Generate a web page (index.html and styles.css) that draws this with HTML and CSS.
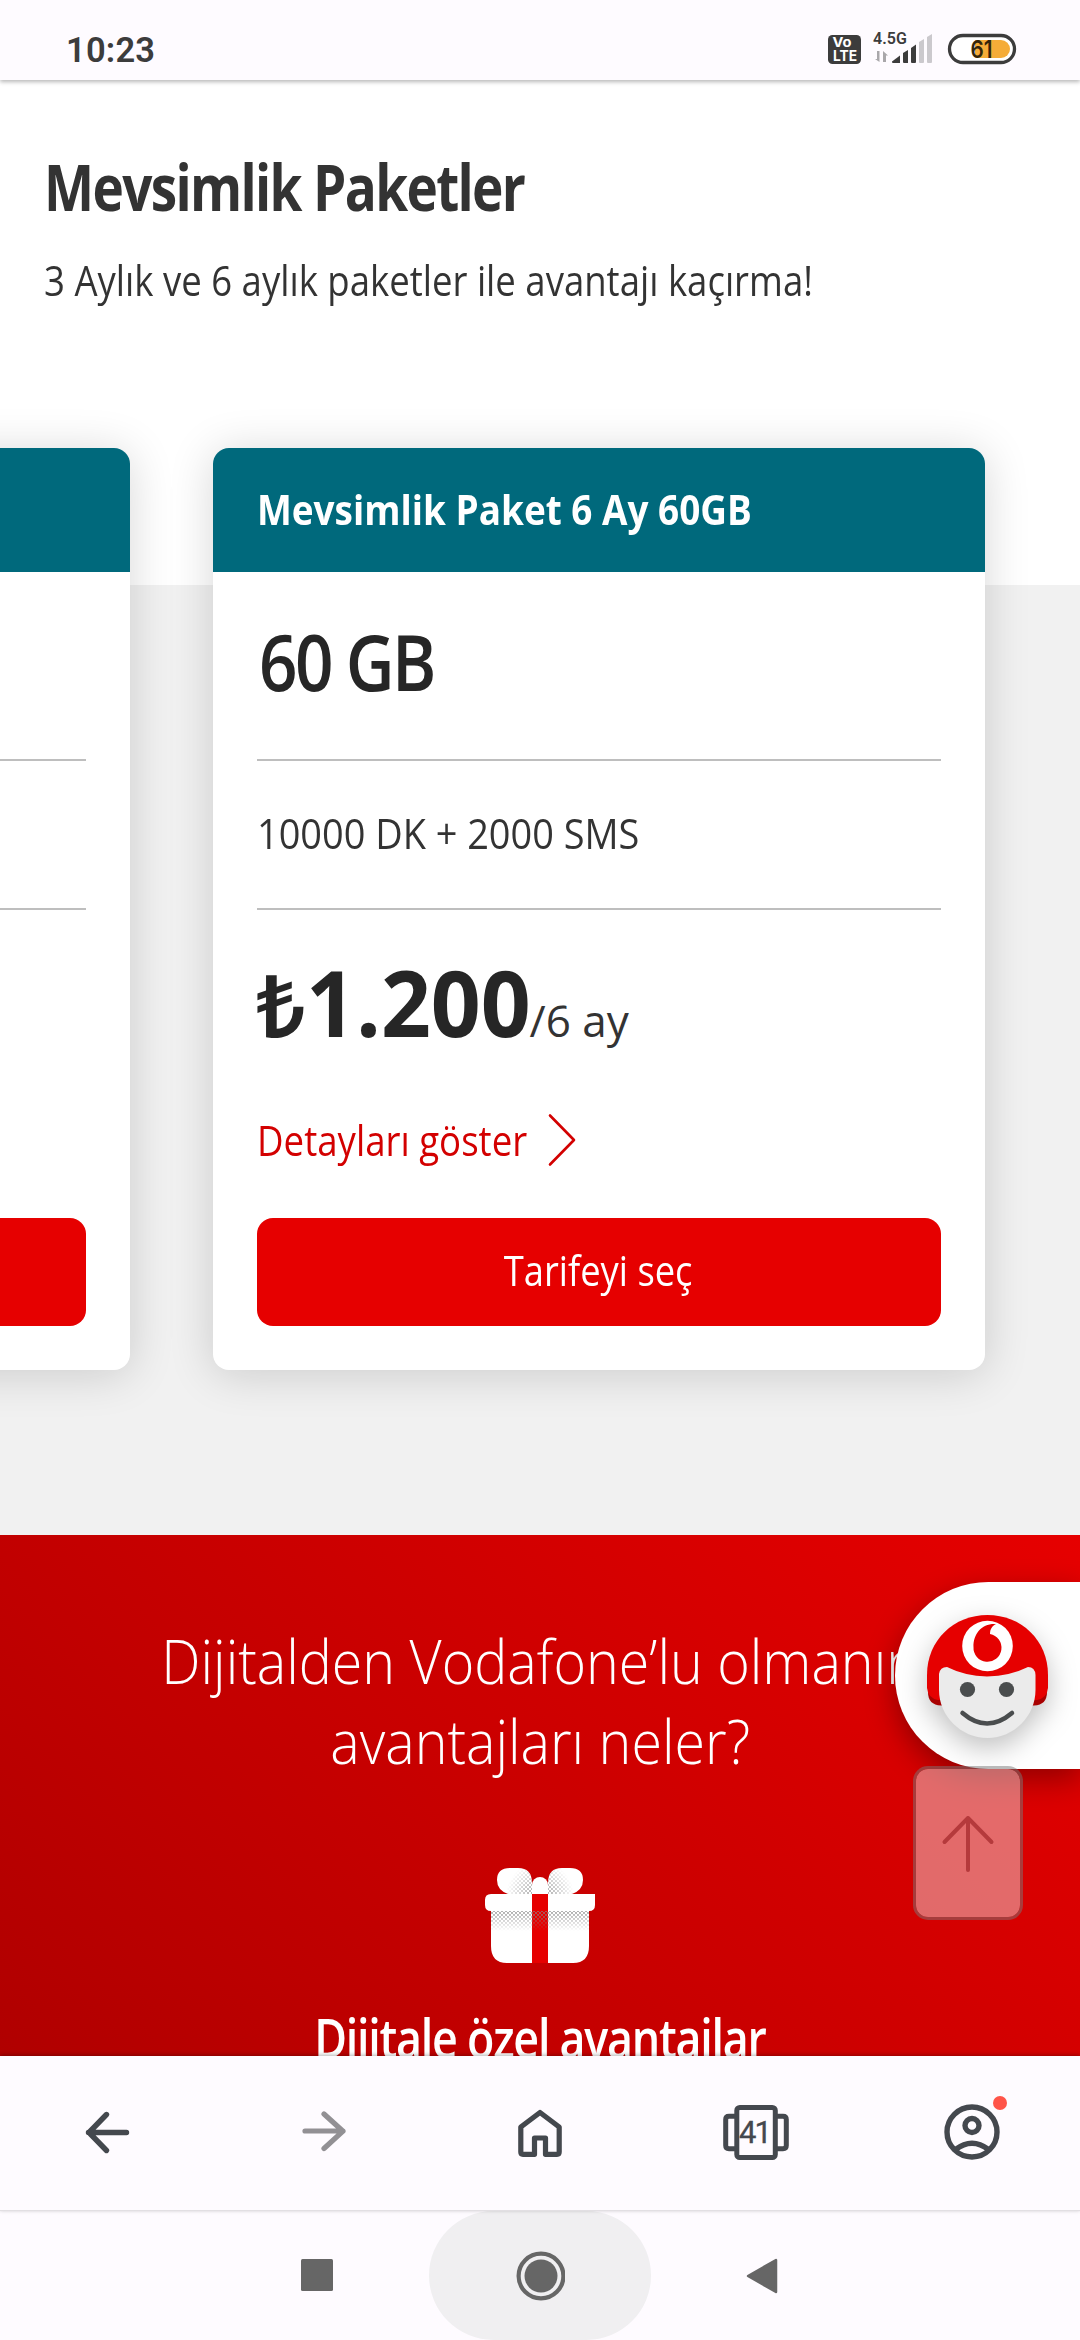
FILE: index.html
```html
<!DOCTYPE html>
<html lang="tr">
<head>
<meta charset="utf-8">
<title>Mevsimlik Paketler</title>
<link rel="stylesheet" href="styles.css">
</head>
<body>
<div class="screen">
  <header class="status">
    <span class="clock">10:23</span>
    <svg class="status-icons" width="190" height="40" viewBox="828 30 190 40">
      <rect x="828" y="35" width="33" height="29" rx="4.5" fill="#3c3c3c"/>
      <g fill="#fff" font-family="Inter, sans-serif" font-weight="700">
        <text x="832.5" y="47" font-size="13" textLength="19" lengthAdjust="spacingAndGlyphs">Vo</text>
        <text x="833" y="61" font-size="14" textLength="24" lengthAdjust="spacingAndGlyphs">LTE</text>
      </g>
      <text x="873" y="44" font-family="Roboto, sans-serif" font-size="16" font-weight="600" fill="#3c3c3c" textLength="34">4.5G</text>
      <path d="M879.500 51V62L875 59H877V51ZM883 62V51L888 55.500H886V62Z" fill="#a9a7aa"/>
      <g fill="#3c3c3c">
        <path d="M892 61.500L900 55.500V63H893Q892 63 892 62Z"/>
        <path d="M903 53L908 50V63H904Q903 63 903 62Z"/>
        <path d="M911 48L916 44.500V62Q916 63 915 63H912Q911 63 911 62Z"/>
      </g>
      <g fill="#cbc9cd">
        <path d="M919 42L924 39V62Q924 63 923 63H920Q919 63 919 62Z"/>
        <path d="M927 37L932 34V62Q932 63 931 63H928Q927 63 927 62Z"/>
      </g>
      <rect x="949.500" y="35.500" width="65" height="27" rx="13.500" fill="#fff" stroke="#3c3c3c" stroke-width="3.300"/>
      <path d="M975 40H1001A9 9 0 0 1 1001 58H975Z" fill="#f5ac38"/>
      <text x="970.500" y="58" font-family="Inter, sans-serif" font-size="24" font-weight="600" fill="#33240b" textLength="22" lengthAdjust="spacingAndGlyphs">61</text>
    </svg>
  </header>

  <main class="page">
    <section class="tariffs">
      <h1 class="title">Mevsimlik Paketler</h1>
      <p class="subtitle">3 Aylık ve 6 aylık paketler ile avantajı kaçırma!</p>
      <div class="cards">
        <article class="card">
          <div class="card-head"></div>
          <div class="card-body">
            <div class="quota"></div>
            <div class="extras"></div>
            <div class="price"></div>
            <div class="details"></div>
            <div class="choose"></div>
          </div>
        </article>
        <article class="card">
          <div class="card-head"><h2 class="card-name">Mevsimlik Paket 6 Ay 60GB</h2></div>
          <div class="card-body">
            <div class="quota"><span class="quota-text">60 GB</span></div>
            <div class="extras"><span class="extras-text">10000 DK + 2000 SMS</span></div>
            <div class="price"><span class="lira">₺</span><span class="amount">1.200</span><span class="period">/6 ay</span></div>
            <a class="details"><span class="details-label">Detayları göster</span>
              <svg width="30" height="54" viewBox="0 0 30 54" fill="none" stroke="#d30000" stroke-width="2.600" stroke-linecap="round" stroke-linejoin="round"><path d="M3 2.500L27 27L3 51.500"/></svg>
            </a>
            <div class="choose"><span class="choose-label">Tarifeyi seç</span></div>
          </div>
        </article>
      </div>
    </section>

    <section class="benefits">
      <h2 class="benefits-title">Dijitalden Vodafone’lu olmanın<br>avantajları neler?</h2>
      <svg class="gift" width="112" height="98" viewBox="485 1867 112 98">
        <defs>
          <pattern id="dots" width="4" height="4" patternUnits="userSpaceOnUse">
            <circle cx="1" cy="1" r=".9" fill="#888"/><circle cx="3" cy="3" r=".9" fill="#888"/>
          </pattern>
          <linearGradient id="fade" x2="0" y2="1"><stop stop-color="#fff"/><stop offset="1" stop-color="#fff" stop-opacity="0"/></linearGradient>
          <radialGradient id="corner" gradientUnits="userSpaceOnUse" cx="541" cy="1896" r="34"><stop offset=".2" stop-color="#fff"/><stop offset="1" stop-color="#fff" stop-opacity="0"/></radialGradient>
          <mask id="bandMask"><rect x="491" y="1911" width="100" height="20" fill="url(#fade)"/></mask>
          <mask id="bowMask"><rect x="498" y="1868" width="86" height="27" fill="url(#corner)"/></mask>
        </defs>
        <path d="M509 1894Q498 1890 498 1880Q498 1868 511 1868H519Q533 1868 533 1883V1894ZM573 1894Q584 1890 584 1880Q584 1868 571 1868H563Q549 1868 549 1883V1894Z" fill="#fff"/>
        <path d="M509 1894Q498 1890 498 1880Q498 1868 511 1868H519Q533 1868 533 1883V1894ZM573 1894Q584 1890 584 1880Q584 1868 571 1868H563Q549 1868 549 1883V1894Z" fill="url(#dots)" mask="url(#bowMask)"/>
        <path d="M533 1894V1885A8 8 0 0 1 549 1885V1894Z" fill="#fff"/>
        <path d="M492 1894H596V1905Q596 1911 590 1911V1946Q590 1963 574 1963H508Q492 1963 492 1946V1911Q486 1911 486 1905V1900Q486 1894 492 1894Z" fill="#fff"/>
        <rect x="533" y="1894" width="16" height="69" fill="#e60000"/>
        <rect x="492" y="1911" width="98" height="20" fill="url(#dots)" mask="url(#bandMask)"/>
      </svg>
      <h3 class="benefit-name">Dijitale özel avantajlar</h3>
    </section>

    <div class="chat">
      <svg class="bot" width="122" height="126" viewBox="926 1614 122 126">
        <path d="M928 1692Q928 1705 941 1705.500H1034Q1047 1705 1047 1692V1684H928Z" fill="#a80000"/>
        <path d="M927 1675C927 1640 954 1615 987.500 1615S1048 1640 1048 1675V1688Q1047 1698 1037 1700H938Q928 1698 927 1688Z" fill="#e60000"/>
        <path d="M939 1674Q940 1667 947 1667Q965 1676 987 1676.500Q1010 1676 1028 1667Q1035 1667 1035.500 1675V1690C1035.500 1716 1014 1738 987.500 1738S939 1716 939 1690Z" fill="#ebebeb"/>
        <circle cx="987.500" cy="1646" r="25.300" fill="#fff"/>
        <path d="M996 1624C982 1623 973 1634 973.500 1647A14 14 0 1 0 990 1634C990 1629 992 1626 996 1624Z" fill="#e60000"/>
        <circle cx="967.500" cy="1689.500" r="7.600" fill="#4a4d4e"/>
        <circle cx="1006.500" cy="1689.500" r="7.600" fill="#4a4d4e"/>
        <path d="M962.500 1713Q987 1734 1012 1713" fill="none" stroke="#4a4d4e" stroke-width="4.500" stroke-linecap="round"/>
      </svg>
    </div>
    <div class="to-top">
      <svg width="54" height="58" viewBox="0 0 54 58" fill="none" stroke="#b53a3c" stroke-width="4" stroke-linecap="round" stroke-linejoin="round"><path d="M27 56V4M3.500 28L27 4L50.500 28"/></svg>
    </div>
  </main>

  <nav class="toolbar">
    <svg viewBox="0 0 80 80" fill="none" stroke="#44484e" stroke-width="5.400" stroke-linecap="round" stroke-linejoin="round"><path d="M58.500 40.500H20.500M38.500 22.500L21 40.500L38.500 58.500"/></svg>
    <svg viewBox="0 0 80 80" fill="none" stroke="#929094" stroke-width="5.200" stroke-linecap="round" stroke-linejoin="round"><path d="M21 39H59M40 22L59 39.200L40 56.500"/></svg>
    <svg viewBox="0 0 80 80" fill="none" stroke="#44484e" stroke-width="5.200" stroke-linejoin="round"><path d="M40 20.500L20.800 35V60Q20.800 62.300 23 62.300H34.500V46H45.500V62.300H57Q59.200 62.300 59.200 60V35Z"/></svg>
    <svg viewBox="0 0 80 80" fill="none" stroke="#44484e" stroke-width="5"><rect x="20.800" y="15.500" width="38.500" height="50" rx="3"/><path d="M20 24.300H13Q9.700 24.300 9.700 27.500V53.500Q9.700 56.700 13 56.700H20M60 24.300H67Q70.300 24.300 70.300 27.500V53.500Q70.300 56.700 67 56.700H60"/><text x="23" y="51" class="tab-count" textLength="33">41</text></svg>
    <svg viewBox="0 0 80 80" fill="none" stroke="#44484e" stroke-width="5.400"><circle cx="40" cy="40" r="25"/><circle cx="40" cy="33.500" r="7"/><path d="M23.500 57.500Q40 45 56.500 57.500"/><circle cx="68" cy="11" r="7" fill="#ff5449" stroke="none"/></svg>
  </nav>

  <footer class="system">
    <div class="key"><svg width="34" height="34"><rect x="0" y="0" width="32" height="32" rx="1.500" fill="#666"/></svg></div>
    <div class="key pressed"><svg width="50" height="50"><circle cx="26" cy="25" r="22.400" fill="none" stroke="#666" stroke-width="4.200"/><circle cx="26" cy="25" r="16.500" fill="#666"/></svg></div>
    <div class="key"><svg width="34" height="38"><path d="M3 19L31 3V35Z" fill="#666" stroke="#666" stroke-width="2.500" stroke-linejoin="round"/></svg></div>
  </footer>
</div>
</body>
</html>
```
FILE: styles.css
```css
* { box-sizing: border-box; margin: 0; padding: 0; }
body { background: #fff; font-family: "Open Sans", "Noto Sans", sans-serif; color: #333; }
svg { display: block; flex: none; }

.screen { width: 1080px; height: 2340px; display: flex; flex-direction: column; overflow: hidden; }

.status {
  position: relative; z-index: 3; flex: none; height: 80px; padding: 30px 62px 10px 66px;
  display: flex; justify-content: space-between; background: #fefbff;
  box-shadow: 0 2px 4px rgba(0, 0, 0, .28);
}
.clock { font: 600 34.500px/40px Roboto, sans-serif; letter-spacing: .2px; color: #3c3c3c; }

.page { position: relative; height: 1976px; flex: none; overflow: hidden; }

/* Text is condensed horizontally to get the narrow brand letterforms. */
.title, .subtitle, .card-name, .quota-text, .extras-text, .amount, .period, .details-label {
  white-space: nowrap; transform-origin: left;
}
.quota-text, .extras-text, .choose-label { display: inline-block; }

.tariffs { height: 1455px; padding: 67px 44px 0; background: linear-gradient(#fff 505px, #f1f1f1 505px); }
.title { font-size: 64px; line-height: 80px; font-weight: 700; letter-spacing: -2px; transform: scaleX(.83); }
.subtitle { margin-top: 25px; font-size: 42px; line-height: 56px; transform: scaleX(.87); }

.cards { display: flex; gap: 83px; margin: 140px 0 0 -686.500px; }
.card { flex: none; width: 772px; height: 922px; border-radius: 16px; background: #fff; box-shadow: 0 4px 46px rgba(0, 0, 0, .16); }
.card-head { height: 124px; padding: 0 44px; border-radius: 16px 16px 0 0; background: #00697c; color: #fff; }
.card-name { font-size: 42px; line-height: 122px; font-weight: 700; transform: scaleX(.879); }
.card-body { padding: 0 44px; }
.quota { height: 189px; padding-left: 2px; border-bottom: 2px solid #bebebe; color: #262626; font-size: 77px; line-height: 180px; font-weight: 650; }
.quota-text { letter-spacing: -3px; transform: scaleX(.875); }
.extras { height: 149px; border-bottom: 2px solid #bebebe; font-size: 42px; line-height: 144px; }
.extras-text { transform: scaleX(.902); }
.price { display: flex; align-items: baseline; height: 184px; line-height: 184px; color: #262626; }
.lira { width: 49px; font-size: 86px; font-weight: 600; }
.amount { width: 224px; font-size: 92px; font-weight: 700; transform: scaleX(.95); }
.period { font-size: 44px; color: #333; }
.details { display: flex; align-items: center; height: 92px; line-height: 92px; font-size: 42px; color: #d30000; }
.details-label { flex: none; width: 290px; transform: scaleX(.872); }
.choose {
  height: 108px; margin-top: 32px; border-radius: 16px; background: #e60000; color: #fff;
  font-size: 42px; line-height: 104px; text-align: center;
}
.choose-label { transform: scaleX(.865); }

.benefits {
  height: 521px; padding-top: 86px; display: flex; flex-direction: column; align-items: center;
  background: linear-gradient(45deg, #b00000, #e60000); color: #fff; text-align: center;
}
.benefits-title { font-size: 60px; line-height: 80px; font-weight: 300; white-space: nowrap; transform: scaleX(.926); }
.gift { margin-top: 86px; }
.benefit-name { margin-top: 36px; font-size: 54px; line-height: 72px; font-weight: 600; letter-spacing: -1.500px; white-space: nowrap; transform: scaleX(.83); }

.chat {
  position: absolute; top: 1502px; right: 0; width: 185px; height: 187px; padding: 32px 0 0 31px;
  border-radius: 93.500px 0 0 93.500px; background: #fff; box-shadow: 0 10px 30px rgba(0, 0, 0, .35);
}
.bot { filter: drop-shadow(0 10px 14px rgba(0, 0, 0, .25)); overflow: visible; }
.to-top {
  position: absolute; top: 1686px; left: 913px; width: 110px; height: 154px; border-radius: 15px;
  display: flex; align-items: center; justify-content: center;
  background: rgba(240, 225, 225, .47); border: 3px solid rgba(120, 120, 120, .5); background-clip: padding-box;
}

.toolbar {
  position: relative; flex: none; height: 155px; padding-bottom: 2px; background: #fefbff; border-bottom: 1px solid #e2dfe3;
  display: grid; grid-template-columns: repeat(5, 216px); align-items: center; justify-items: center;
  box-shadow: 0 -1px 4px rgba(0, 0, 0, .3);
}
.toolbar svg { width: 80px; height: 80px; overflow: visible; }
.tab-count { font: 400 31px Roboto, sans-serif; fill: #44484e; stroke: #44484e; stroke-width: .3px; }

.system { flex: none; height: 129px; background: #fefbff; display: grid; grid-template-columns: 222px 222px 222px; justify-content: center; }
.key { display: flex; align-items: center; justify-content: center; }
.pressed { border-radius: 65px; background: #f0eff1; }
```
